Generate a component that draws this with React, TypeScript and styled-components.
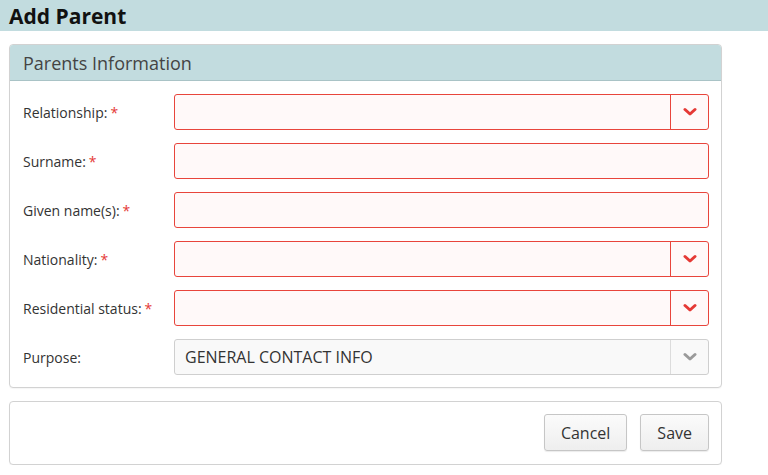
import React from 'react'
import styled, { createGlobalStyle } from 'styled-components'

const GlobalStyle = createGlobalStyle`
  body {
    margin: 0;
    background: #fff;
    font-family: 'Open Sans', 'Liberation Sans', sans-serif;
    color: #333;
  }
`

const TitleBar = styled.header`
  height: 31px;
  background: #c2dcdf;
  padding-left: 9px;
  display: flex;
  align-items: center;
`
const Title = styled.h1`
  margin: 0;
  font-size: 21px;
  font-weight: 700;
  color: #111;
`
const Content = styled.main`
  width: 713px;
  margin-left: 9px;
  padding-top: 13px;
  display: flex;
  flex-direction: column;
  gap: 13px;
`
const Panel = styled.section`
  border: 1px solid #d2d2d2;
  border-radius: 4px;
  background: #fff;
  box-shadow: 0 1px 1px rgba(0, 0, 0, 0.04);
  overflow: hidden;
`
const PanelHeader = styled.div`
  height: 35px;
  background: #c2dcdf;
  border-bottom: 1px solid #a9c3c6;
  display: flex;
  align-items: center;
  padding-left: 13px;
  font-size: 18px;
  color: #444;
`
const PanelBody = styled.div`
  padding: 13px 12px 12px 13px;
  display: flex;
  flex-direction: column;
  gap: 13px;
`
const Row = styled.div`
  display: flex;
  align-items: center;
`
const Label = styled.label`
  width: 151px;
  flex-shrink: 0;
  font-size: 14px;
  color: #333;
`
const Star = styled.span`
  color: #e53935;
  margin-left: 3px;
`
const Field = styled.div<{ $invalid?: boolean }>`
  flex: 1;
  height: 36px;
  box-sizing: border-box;
  border: 1px solid ${p => (p.$invalid ? '#e8453c' : '#cfcfcf')};
  border-radius: 3px;
  background: ${p => (p.$invalid ? '#fff9f9' : '#f9f9f9')};
  display: flex;
  align-items: stretch;
`
const FieldText = styled.div`
  flex: 1;
  display: flex;
  align-items: center;
  padding-left: 10px;
  font-size: 16px;
  color: #333;
`
const Caret = styled.div<{ $invalid?: boolean }>`
  width: 37px;
  border-left: 1px solid ${p => (p.$invalid ? '#e8453c' : '#dcdcdc')};
  display: flex;
  align-items: center;
  justify-content: center;
  color: ${p => (p.$invalid ? '#e53935' : '#9a9a9a')};
`
const Footer = styled.div`
  padding: 12px 12px 13px;
  height: 37px;
  display: flex;
  justify-content: flex-end;
  gap: 13px;
`
const Button = styled.button`
  height: 37px;
  padding: 0 16px;
  font-family: inherit;
  font-size: 16px;
  color: #333;
  border: 1px solid #c6c6c6;
  border-radius: 3px;
  background: linear-gradient(#fbfbfb, #eeeeee);
  box-shadow: 0 1px 1px rgba(0, 0, 0, 0.08);
`

const Chevron = () => (
  <svg width="14" height="10" viewBox="0 0 14 10">
    <polyline
      points="2,2.5 7,7 12,2.5"
      fill="none"
      stroke="currentColor"
      strokeWidth="3"
      strokeLinecap="round"
      strokeLinejoin="round"
    />
  </svg>
)

interface IRow {
  label: string
  required: boolean
  select: boolean
  value?: string
}

const rows: IRow[] = [
  { label: 'Relationship:', required: true, select: true },
  { label: 'Surname:', required: true, select: false },
  { label: 'Given name(s):', required: true, select: false },
  { label: 'Nationality:', required: true, select: true },
  { label: 'Residential status:', required: true, select: true },
  { label: 'Purpose:', required: false, select: true, value: 'GENERAL CONTACT INFO' }
]

export default function App() {
  return (
    <>
      <GlobalStyle />
      <TitleBar>
        <Title>Add Parent</Title>
      </TitleBar>
      <Content>
        <Panel>
          <PanelHeader>Parents Information</PanelHeader>
          <PanelBody>
            {rows.map(r => (
              <Row key={r.label}>
                <Label>
                  {r.label}
                  {r.required && <Star>*</Star>}
                </Label>
                <Field $invalid={r.required}>
                  <FieldText>{r.value}</FieldText>
                  {r.select && (
                    <Caret $invalid={r.required}>
                      <Chevron />
                    </Caret>
                  )}
                </Field>
              </Row>
            ))}
          </PanelBody>
        </Panel>
        <Panel>
          <Footer>
            <Button>Cancel</Button>
            <Button>Save</Button>
          </Footer>
        </Panel>
      </Content>
    </>
  )
}
